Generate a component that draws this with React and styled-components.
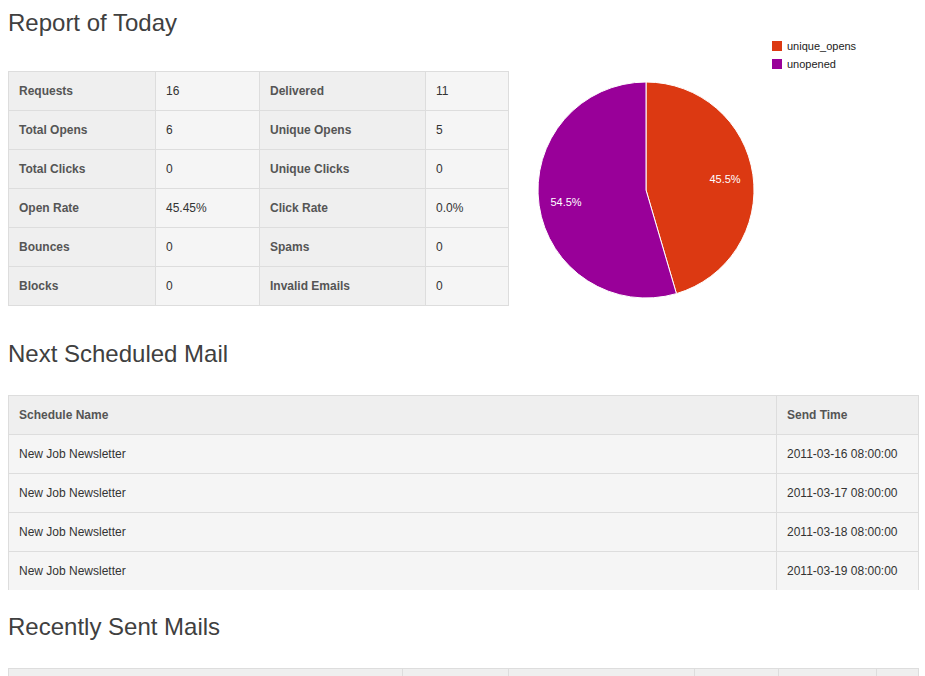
import styled, { createGlobalStyle } from "styled-components";

const GlobalStyle = createGlobalStyle`
  body {
    margin: 0;
    background: #fff;
    font-family: "Liberation Sans", Arial, Helvetica, sans-serif;
  }
`;

const Page = styled.div`
  padding: 0 8px;
  width: 910px;
`;

const Heading = styled.h2`
  font-family: "Liberation Sans", Arial, Helvetica, sans-serif;
  font-size: 24px;
  font-weight: normal;
  line-height: 36px;
  color: #404040;
  margin: ${(p) => p.$top}px 0 ${(p) => p.$bottom}px 0;
`;

const TopRow = styled.div`
  display: flex;
  align-items: flex-start;
`;

const LeftColumn = styled.div`
  width: 500px;
`;

const Table = styled.table`
  border-collapse: collapse;
  table-layout: fixed;
  width: ${(p) => p.$width}px;
  font-size: 12px;
  line-height: 14px;

  th,
  td {
    border: 1px solid #ddd;
    padding: 12px 10px;
    text-align: left;
    white-space: nowrap;
    overflow: hidden;
  }
  th {
    background: #efefef;
    color: #555;
    font-weight: bold;
  }
  td {
    background: #f5f5f5;
    color: #333;
  }
  ${(p) =>
    p.$open &&
    `
    tbody tr:last-child td { border-bottom: 0; }
  `}
`;

const Col = styled.col`
  width: ${(p) => p.$w}px;
`;

const ChartBox = styled.div`
  width: 410px;
  height: 300px;
`;

const ChartLabel = styled.text`
  font-family: "Liberation Sans", Arial, sans-serif;
  font-size: 11px;
  fill: ${(p) => p.$color || "#222"};
`;

const stats = [
  ["Requests", "16", "Delivered", "11"],
  ["Total Opens", "6", "Unique Opens", "5"],
  ["Total Clicks", "0", "Unique Clicks", "0"],
  ["Open Rate", "45.45%", "Click Rate", "0.0%"],
  ["Bounces", "0", "Spams", "0"],
  ["Blocks", "0", "Invalid Emails", "0"],
];

const scheduled = [
  "2011-03-16 08:00:00",
  "2011-03-17 08:00:00",
  "2011-03-18 08:00:00",
  "2011-03-19 08:00:00",
];

function PieChart() {
  const cx = 138;
  const cy = 190;
  const r = 108;
  const share = 5 / 11;
  const a = share * Math.PI * 2;
  const ex = cx + r * Math.sin(a);
  const ey = cy - r * Math.cos(a);
  return (
    <ChartBox>
      <svg width="410" height="300" viewBox="0 0 410 300">
        <path
          d={`M${cx},${cy} L${cx},${cy - r} A${r},${r} 0 0 1 ${ex},${ey} Z`}
          fill="#dc3912"
          stroke="#fff"
          strokeWidth="1"
        />
        <path
          d={`M${cx},${cy} L${ex},${ey} A${r},${r} 0 1 1 ${cx},${cy - r} Z`}
          fill="#990099"
          stroke="#fff"
          strokeWidth="1"
        />
        <ChartLabel x="217" y="183" textAnchor="middle" $color="#fff">
          45.5%
        </ChartLabel>
        <ChartLabel x="58" y="206" textAnchor="middle" $color="#fff">
          54.5%
        </ChartLabel>
        <rect x="264" y="41" width="10" height="10" fill="#dc3912" />
        <ChartLabel x="279" y="50">unique_opens</ChartLabel>
        <rect x="264" y="59" width="10" height="10" fill="#990099" />
        <ChartLabel x="279" y="68">unopened</ChartLabel>
      </svg>
    </ChartBox>
  );
}

export default function App() {
  return (
    <>
      <GlobalStyle />
      <Page>
        <TopRow>
          <LeftColumn>
            <Heading $top={5} $bottom={30}>Report of Today</Heading>
            <Table $width={500}>
              <colgroup>
                <Col $w={147} />
                <Col $w={104} />
                <Col $w={166} />
                <Col $w={83} />
              </colgroup>
              <tbody>
                {stats.map((row) => (
                  <tr key={row[0]}>
                    <th>{row[0]}</th>
                    <td>{row[1]}</td>
                    <th>{row[2]}</th>
                    <td>{row[3]}</td>
                  </tr>
                ))}
              </tbody>
            </Table>
          </LeftColumn>
          <PieChart />
        </TopRow>

        <Heading $top={30} $bottom={23}>Next Scheduled Mail</Heading>
        <Table $width={910} $open>
          <colgroup>
            <Col $w={768} />
            <Col $w={142} />
          </colgroup>
          <thead>
            <tr>
              <th>Schedule Name</th>
              <th>Send Time</th>
            </tr>
          </thead>
          <tbody>
            {scheduled.map((t) => (
              <tr key={t}>
                <td>New Job Newsletter</td>
                <td>{t}</td>
              </tr>
            ))}
          </tbody>
        </Table>

        <Heading $top={19} $bottom={23}>Recently Sent Mails</Heading>
        <Table $width={910}>
          <colgroup>
            <Col $w={394} />
            <Col $w={106} />
            <Col $w={186} />
            <Col $w={84} />
            <Col $w={98} />
            <Col $w={42} />
          </colgroup>
          <thead>
            <tr>
              <th>Mail Name</th>
              <th>Requests</th>
              <th>Sent At</th>
              <th>Opens</th>
              <th>Clicks</th>
              <th></th>
            </tr>
          </thead>
        </Table>
      </Page>
    </>
  );
}
